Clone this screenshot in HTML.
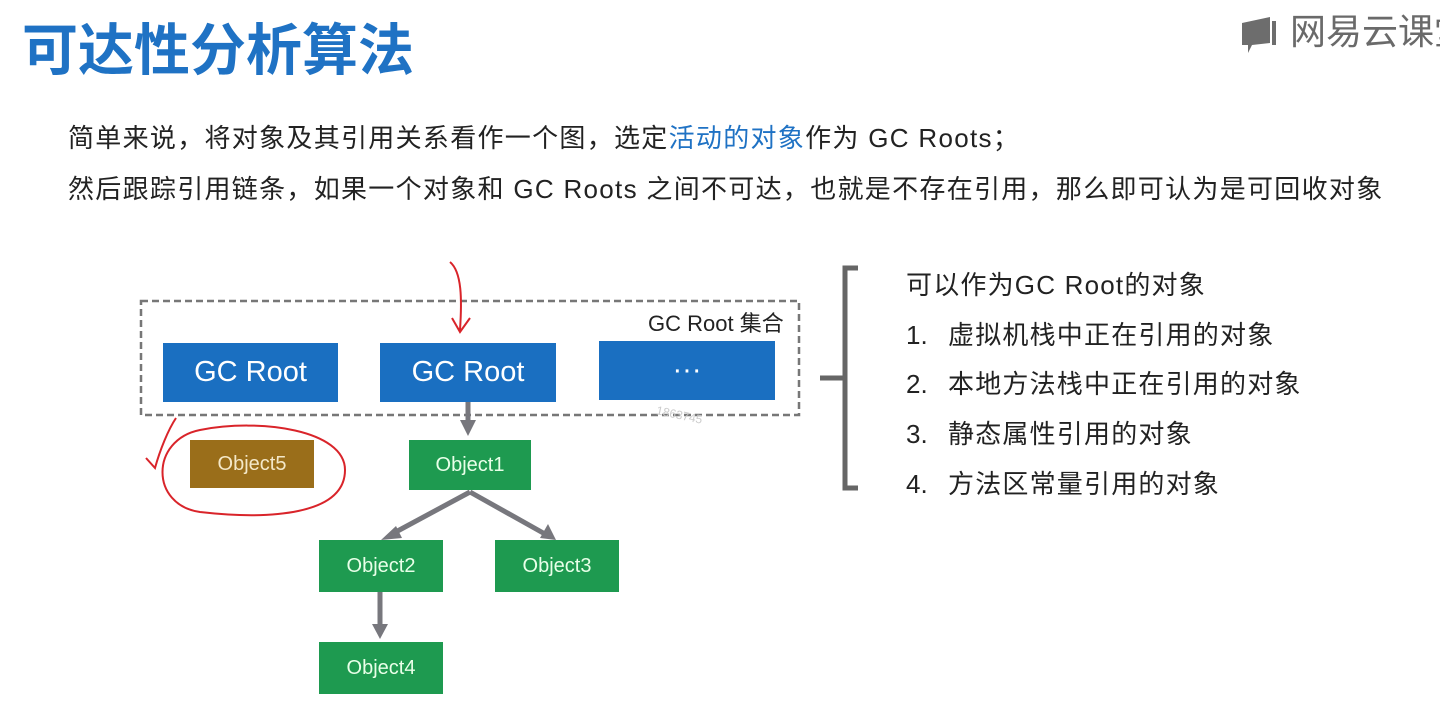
<!DOCTYPE html>
<html><head><meta charset="utf-8"><style>
body{margin:0;width:1440px;height:715px;background:#fff;position:relative;overflow:hidden;font-family:"Liberation Sans","Noto Sans CJK SC",sans-serif;}
.a{position:absolute;white-space:nowrap;}
.t{color:#222;font-size:26px;}
.r{letter-spacing:1.2px;}
.box{position:absolute;display:flex;align-items:center;justify-content:center;color:#fff;}
.b{background:#1a6fc1;font-size:29px;}
.g{background:#1e9a50;font-size:20px;color:#e8ffe8;}
.n{display:inline-block;width:42px;letter-spacing:0;}
</style></head><body>
<div class="a" style="left:22px;top:6px;font-size:56px;font-weight:bold;color:#1f72c4;">可达性分析算法</div>
<div class="a" style="left:1240px;top:3px;font-size:36px;color:#6a6a6a;">
<svg width="40" height="46" style="vertical-align:middle" viewBox="0 0 40 42"><path d="M2 10 L30 4 L30 30 L12 32 L8 40 L8 32 L2 32 Z" fill="#6d6d6d"/><path d="M32 8 L36 8 L36 32 L32 32Z" fill="#6d6d6d"/></svg> 网易云课堂</div>
<div class="a t" style="left:68px;top:118px;letter-spacing:1.3px;">简单来说，将对象及其引用关系看作一个图，选定<span style="color:#1f72c4">活动的对象</span>作为 GC Roots；</div>
<div class="a t" style="left:68px;top:169px;letter-spacing:1.3px;">然后跟踪引用链条，如果一个对象和 GC Roots 之间不可达，也就是不存在引用，那么即可认为是可回收对象</div>
<svg class="a" style="left:0;top:0" width="1440" height="715">
<rect x="141" y="301" width="658" height="114" fill="none" stroke="#777" stroke-width="2.5" stroke-dasharray="7,4"/>
<g stroke="#77777d" stroke-width="5" fill="#77777d">
<line x1="468" y1="402" x2="468" y2="422"/><polygon points="460,420 476,420 468,436" stroke="none"/>
<line x1="470" y1="492" x2="392" y2="534"/><polygon points="381,540 396,526 402,538" stroke="none"/>
<line x1="470" y1="492" x2="545" y2="534"/><polygon points="556,540 540,538 548,524" stroke="none"/>
<line x1="380" y1="592" x2="380" y2="626"/><polygon points="372,624 388,624 380,639" stroke="none"/>
</g>
<path d="M450 262 C462 272 462 300 460 330 M452 318 L460 332 L470 318" stroke="#d9242a" stroke-width="2" fill="none"/>
<path d="M176 418 C168 430 160 450 155 468 L146 458" stroke="#d9242a" stroke-width="2" fill="none"/>
<path d="M200 430 C260 418 345 430 345 470 C345 515 270 520 200 512 C150 505 150 440 200 430Z" stroke="#d9242a" stroke-width="2" fill="none"/>
<path d="M858 268 L845 268 L845 488 L858 488 M845 378 L820 378" stroke="#666" stroke-width="5" fill="none"/>
</svg>
<div class="a" style="left:648px;top:306px;font-size:22px;color:#222;">GC Root 集合</div>
<div class="box b" style="left:163px;top:343px;width:175px;height:59px;">GC Root</div>
<div class="box b" style="left:380px;top:343px;width:176px;height:59px;">GC Root</div>
<div class="box b" style="left:599px;top:341px;width:176px;height:59px;">···</div>
<div class="a" style="left:656px;top:408px;font-size:12px;color:#ccc;transform:rotate(12deg);">1863745</div>
<div class="box g" style="left:190px;top:440px;width:124px;height:48px;background:#9a6e1a;color:#f4e8c8;">Object5</div>
<div class="box g" style="left:409px;top:440px;width:122px;height:50px;">Object1</div>
<div class="box g" style="left:319px;top:540px;width:124px;height:52px;">Object2</div>
<div class="box g" style="left:495px;top:540px;width:124px;height:52px;">Object3</div>
<div class="box g" style="left:319px;top:642px;width:124px;height:52px;">Object4</div>
<div class="a t r" style="left:906px;top:265px;">可以作为GC Root的对象</div>
<div class="a t r" style="left:906px;top:315px;"><span class="n">1.</span>虚拟机栈中正在引用的对象</div>
<div class="a t r" style="left:906px;top:364px;"><span class="n">2.</span>本地方法栈中正在引用的对象</div>
<div class="a t r" style="left:906px;top:414px;"><span class="n">3.</span>静态属性引用的对象</div>
<div class="a t r" style="left:906px;top:464px;"><span class="n">4.</span>方法区常量引用的对象</div>
</body></html>
